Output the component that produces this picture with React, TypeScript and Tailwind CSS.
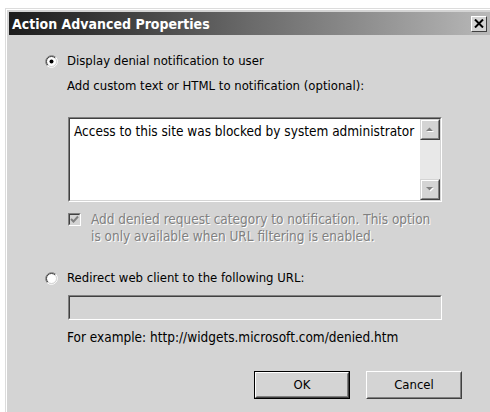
import type { ReactNode } from 'react';

const face = "font-['DejaVu_Sans_Condensed','Liberation_Sans',sans-serif]";

function Radio({ checked }: { checked?: boolean }) {
  return (
    <svg width="13" height="13" viewBox="0 0 13 13" className="shrink-0">
      <circle cx="6.5" cy="6.5" r="5" fill="#ffffff" />
      <path d="M2.26 10.74 A6 6 0 0 1 10.74 2.26" fill="none" stroke="#808080" />
      <path d="M10.74 2.26 A6 6 0 0 1 2.26 10.74" fill="none" stroke="#ffffff" />
      <path d="M2.96 10.04 A5 5 0 0 1 10.04 2.96" fill="none" stroke="#404040" />
      <path d="M10.04 2.96 A5 5 0 0 1 2.96 10.04" fill="none" stroke="#d4d4d4" />
      {checked && <circle cx="6.5" cy="6.5" r="2" fill="#000000" />}
    </svg>
  );
}

// two-line sunken edge used by edit boxes and the checkbox
function Sunken({ className, inner, children }: { className: string; inner: string; children?: ReactNode }) {
  return (
    <div className={`border border-t-[#808080] border-l-[#808080] border-b-white border-r-white ${className}`}>
      <div className={`h-full border border-t-[#404040] border-l-[#404040] border-b-[#d4d4d4] border-r-[#d4d4d4] ${inner}`}>
        {children}
      </div>
    </div>
  );
}

function ScrollButton({ up }: { up?: boolean }) {
  return (
    <div className="h-[21px] border border-t-[#d4d4d4] border-l-[#d4d4d4] border-b-[#404040] border-r-[#404040] bg-[#d4d4d4]">
      <div className="h-full flex items-center justify-center border border-t-white border-l-white border-b-[#808080] border-r-[#808080]">
        <svg width="10" height="7" viewBox="0 0 10 7">
          {up ? (
            <>
              <path d="M2 6 L9 6 L5.5 2.5 Z" fill="#ffffff" />
              <path d="M1 5 L8 5 L4.5 1.5 Z" fill="#808080" />
            </>
          ) : (
            <>
              <path d="M2 2 L9 2 L5.5 5.5 Z" fill="#ffffff" />
              <path d="M1 1 L8 1 L4.5 4.5 Z" fill="#808080" />
            </>
          )}
        </svg>
      </div>
    </div>
  );
}

function PushButton({ label, isDefault }: { label: string; isDefault?: boolean }) {
  return (
    <div className={`w-[96px] h-[28px] ${isDefault ? 'border border-black' : ''}`}>
      <div className="h-full border border-t-white border-l-white border-b-[#404040] border-r-[#404040]">
        <div className="h-full flex items-center justify-center border border-t-[#d4d4d4] border-l-[#d4d4d4] border-b-[#808080] border-r-[#808080] text-[13px] text-black">
          {label}
        </div>
      </div>
    </div>
  );
}

export default function App() {
  return (
    <div className={`w-[490px] h-[412px] overflow-hidden bg-white pt-[8px] pl-[5px] ${face}`}>
      <div className="w-[485px] h-[404px] bg-[#d4d4d4] border-l border-t border-[#dcdcdc]">
        <div className="h-full border-l border-t border-white pl-[2px] pt-[2px]">
          {/* caption */}
          <div className="h-[23px] flex items-center justify-between bg-gradient-to-r from-[#1c1c1c] via-[#6a6a6a] to-[#b8b8b8]">
            <span className="pl-[3px] text-[14px] font-bold text-white leading-none">Action Advanced Properties</span>
            <div className="mr-[3px] w-[16px] h-[16px] border border-t-white border-l-white border-b-[#404040] border-r-[#404040] bg-[#d4d4d4] flex items-center justify-center">
              <svg width="10" height="9" viewBox="0 0 10 9">
                <path d="M1 0.5 L9 8.5 M9 0.5 L1 8.5" stroke="#000000" strokeWidth="2" />
              </svg>
            </div>
          </div>

          {/* dialog body */}
          <div className="pl-[36px] pt-[18px] text-[13px] text-black">
            <div className="h-[16px] flex items-center gap-[9px]">
              <Radio checked />
              <span>Display denial notification to user</span>
            </div>
            <div className="ml-[22px]">
              <div className="mt-[9px] h-[16px] flex items-center">Add custom text or HTML to notification (optional):</div>
              <Sunken className="mt-[23px] ml-[1px] w-[374px] h-[85px]" inner="bg-white flex">
                <div className="flex-1 pl-[4px] pt-[4px] leading-[16px] text-[13.5px]">Access to this site was blocked by system administrator</div>
                <div className="w-[20px] flex flex-col bg-[#e8e8e8]">
                  <ScrollButton up />
                  <div className="flex-1" />
                  <ScrollButton />
                </div>
              </Sunken>
              <div className="mt-[9px] flex gap-[10px]">
                <Sunken className="mt-[2px] ml-[1px] w-[13px] h-[13px] shrink-0" inner="bg-[#d4d4d4] flex items-center justify-center">
                  <svg width="9" height="9" viewBox="0 0 9 9">
                    <path d="M1 4 L3.5 6.5 L8 1.5" fill="none" stroke="#808080" strokeWidth="2" />
                  </svg>
                </Sunken>
                <div className="leading-[17px] text-[13.5px] text-[#808080] [text-shadow:1px_1px_0_#ffffff]">
                  Add denied request category to notification. This option
                  <br />
                  is only available when URL filtering is enabled.
                </div>
              </div>
            </div>
            <div className="mt-[25px] h-[16px] flex items-center gap-[9px]">
              <Radio />
              <span>Redirect web client to the following URL:</span>
            </div>
            <div className="ml-[22px]">
              <Sunken className="mt-[9px] ml-[1px] w-[374px] h-[25px]" inner="bg-[#d4d4d4]" />
              <div className="mt-[9px] h-[16px] flex items-center text-[13.5px]">For example: http://widgets.microsoft.com/denied.htm</div>
            </div>
            <div className="mt-[26px] flex justify-end gap-[16px] mr-[28px]">
              <PushButton label="OK" isDefault />
              <PushButton label="Cancel" />
            </div>
          </div>
        </div>
      </div>
    </div>
  );
}
